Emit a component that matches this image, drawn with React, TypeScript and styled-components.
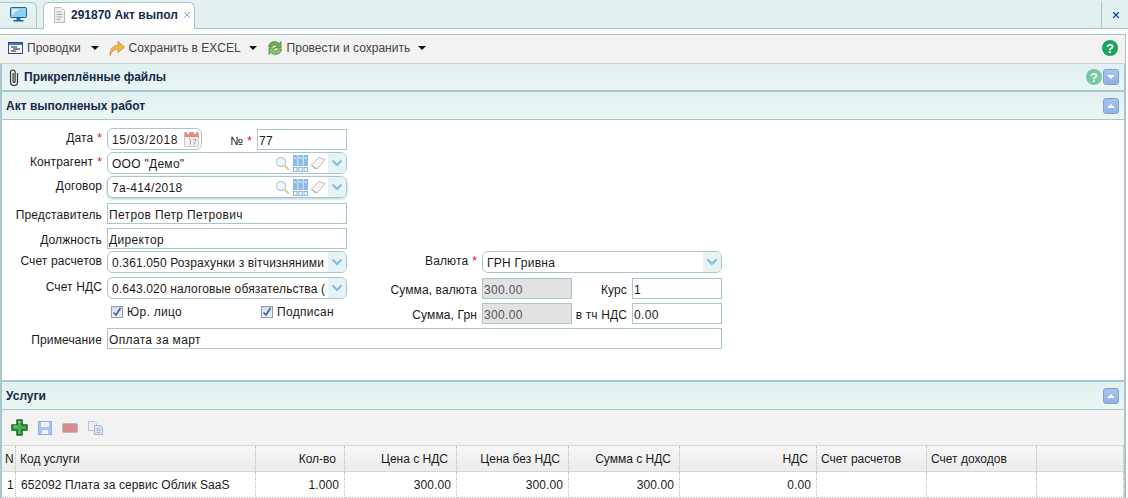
import styled, { createGlobalStyle } from "styled-components";
import { X } from "lucide-react";

const Global = createGlobalStyle`
  html, body { margin: 0; padding: 0; background: #fff; overflow: hidden; }
  body { font-family: "Liberation Sans", Arial, sans-serif; font-size: 12px; color: #1a1a1a; }
`;

const Page = styled.div`
  width: 1128px;
  height: 498px;
  display: flex;
  flex-direction: column;
  overflow: hidden;
`;

const TabBar = styled.div`
  height: 28px;
  flex: none;
  display: flex;
  align-items: flex-end;
  gap: 6px;
  background: #e2f1ef;
  border-bottom: 1px solid #a9c6cc;
`;

const HomeTab = styled.div`
  width: 37px;
  height: 27px;
  margin-bottom: -1px;
  display: flex;
  align-items: center;
  justify-content: center;
  border: 1px solid #a9c6cc;
  border-left: none;
  border-radius: 0 6px 0 0;
  background: linear-gradient(#e8f4f2, #dfeeec);
  padding-bottom: 2px;
  box-sizing: border-box;
`;

const ActiveTab = styled.div`
  width: 152px;
  height: 27px;
  margin-bottom: -1px;
  box-sizing: border-box;
  display: flex;
  align-items: center;
  gap: 4px;
  padding: 0 0 2px 10px;
  background: #fff;
  border: 1px solid #a9c6cc;
  border-bottom: none;
  border-radius: 6px 6px 0 0;
  font-weight: bold;
  color: #15294b;
`;

const TabClose = styled.span`
  display: flex;
  color: #4a6a8a;
`;

const CloseAll = styled.div`
  margin-left: auto;
  width: 27px;
  height: 28px;
  margin-bottom: -1px;
  padding-left: 2px;
  box-sizing: border-box;
  border-left: 1px solid #a9c6cc;
  border-bottom: 1px solid #a9c6cc;
  display: flex;
  align-items: center;
  justify-content: center;
`;

const MainToolbar = styled.div`
  height: 26px;
  margin: 5px 2px 0 0;
  flex: none;
  display: flex;
  align-items: center;
  background: #f2f2f2;
  border-top: 1px solid #a9c6cc;
  border-right: 1px solid #a9c6cc;
  border-bottom: 1px solid #c9d6d8;
  padding: 0 7px 2px 8px;
  color: #444;
`;

const ToolItem = styled.div`
  display: flex;
  align-items: center;
  gap: 4px;
  margin-right: 10px;
`;

const Caret = styled.span<{ $gap?: number }>`
  width: 0;
  height: 0;
  margin-left: ${(p) => p.$gap ?? 6}px;
  border-left: 4px solid transparent;
  border-right: 4px solid transparent;
  border-top: 4px solid #111;
`;

const Help = styled.span<{ $faded?: boolean }>`
  width: 16px;
  height: 16px;
  border-radius: 50%;
  display: flex;
  align-items: center;
  justify-content: center;
  font-weight: bold;
  font-size: 13px;
  color: #fff;
  background: #1aa55f;
  opacity: ${(p) => (p.$faded ? 0.55 : 1)};
`;

const Body = styled.div`
  flex: 1;
  display: flex;
  flex-direction: column;
  border-left: 2px solid #a9c6cc;
  border-right: 2px solid #a9c6cc;
  margin-right: 2px;
`;

const PanelHeader = styled.div<{ $h?: number; $thick?: boolean }>`
  height: ${(p) => p.$h ?? 27}px;
  flex: none;
  display: flex;
  align-items: center;
  gap: 3px;
  padding: 0 5px 0 4px;
  background: linear-gradient(#e1f1ef, #eaf6f4);
  border-bottom: ${(p) => (p.$thick ? 2 : 1)}px solid #a9c6cc;
  font-weight: bold;
  color: #15294b;
`;

const ClipSlot = styled.span`
  display: flex;
  margin: 0 2px 0 3px;
`;

const HeaderTools = styled.div`
  margin-left: auto;
  display: flex;
  align-items: center;
  gap: 1px;
`;

const Toggle = styled.span<{ $down?: boolean }>`
  width: 16px;
  height: 16px;
  box-sizing: border-box;
  border: 1px solid #7fa0d0;
  border-radius: 3px;
  background: linear-gradient(#a6c4ee, #8fb1e4);
  display: flex;
  align-items: center;
  justify-content: center;
  &::after {
    content: "";
    border-left: 4px solid transparent;
    border-right: 4px solid transparent;
    ${(p) => (p.$down ? "border-top: 4px solid #fff;" : "border-bottom: 4px solid #fff;")}
  }
`;

const Form = styled.div`
  height: 262px;
  flex: none;
  box-sizing: border-box;
  padding-top: 8px;
  border-bottom: 2px solid #a9c6cc;
  display: flex;
  flex-direction: column;
`;

const Row = styled.div<{ $top?: number }>`
  display: flex;
  align-items: center;
  margin-top: ${(p) => p.$top ?? 0}px;
`;

const Label = styled.label<{ $w?: number; $flat?: boolean }>`
  width: ${(p) => p.$w ?? 100}px;
  flex: none;
  text-align: right;
  padding-right: 5px;
  box-sizing: border-box;
  white-space: nowrap;
  letter-spacing: 0.12px;
  margin-top: ${(p) => (p.$flat ? 3 : -3)}px;
`;

const Star = styled.span`
  color: #e01010;
  margin-left: 4px;
`;

const TextBox = styled.div<{ $w: number; $off?: boolean }>`
  width: ${(p) => p.$w}px;
  height: 21px;
  flex: none;
  box-sizing: border-box;
  border: 1px solid #a9c6cc;
  padding: 3px 0 0 1px;
  display: flex;
  align-items: center;
  letter-spacing: 0.35px;
  background: ${(p) => (p.$off ? "#e2e2e2" : "#fff")};
  color: ${(p) => (p.$off ? "#555" : "#1a1a1a")};
  white-space: nowrap;
  overflow: hidden;
`;

const Combo = styled.div<{ $w: number; $glow?: boolean }>`
  width: ${(p) => p.$w}px;
  height: 22px;
  flex: none;
  box-sizing: border-box;
  border: 1px solid #a9c6cc;
  border-radius: 6px;
  padding-left: 4px;
  display: flex;
  align-items: center;
  overflow: hidden;
  white-space: nowrap;
  ${(p) => (p.$glow ? "box-shadow: 0 1px 3px rgba(120,160,170,.6);" : "")}
`;

const ComboText = styled.span<{ $tight?: boolean; $wide?: boolean }>`
  flex: 1;
  min-width: 0;
  overflow: hidden;
  padding-top: 1px;
  margin-right: 3px;
  letter-spacing: ${(p) => (p.$tight ? 0.15 : p.$wide ? 0.6 : 0.28)}px;
`;

const ComboIcons = styled.span`
  display: flex;
  align-items: center;
  gap: 3px;
  margin-right: 2px;
  opacity: 0.8;
`;

const CalendarSlot = styled.span`
  display: flex;
  margin-right: 2px;
`;

const Arrow = styled.span`
  width: 18px;
  height: 100%;
  flex: none;
  display: flex;
  align-items: center;
  justify-content: center;
  background: #e6f3f3;
`;

const Columns = styled.div`
  display: flex;
  margin-top: 2px;
`;

const LeftCol = styled.div`
  width: 345px;
  flex: none;
  display: flex;
  flex-direction: column;
  gap: 2px;
`;

const RightCol = styled.div`
  display: flex;
  flex-direction: column;
`;

const Checks = styled.div`
  display: flex;
  margin: 4px 0 0 109px;
`;

const Check = styled.div<{ $w: number }>`
  width: ${(p) => p.$w}px;
  display: flex;
  align-items: center;
  gap: 4px;
  letter-spacing: 0.3px;
`;

const Box = styled.span`
  width: 12px;
  height: 12px;
  box-sizing: border-box;
  border: 1px solid #8f9db0;
  background: linear-gradient(#d5dbe8, #f2f4f8);
  display: flex;
  align-items: center;
  justify-content: center;
`;

const GridToolbar = styled.div`
  height: 35px;
  flex: none;
  display: flex;
  align-items: center;
  gap: 10px;
  padding-left: 9px;
  background: #f2f2f2;
  border-bottom: 1px solid #d8d8d8;
`;

const Table = styled.div`
  display: grid;
  grid-template-columns: 14px 240px 89px 112px 112px 111px 137px 110px 110px 1fr;
`;

const Head = styled.div<{ $right?: boolean }>`
  height: 26px;
  box-sizing: border-box;
  padding: 0 8px 0 4px;
  display: flex;
  align-items: center;
  justify-content: ${(p) => (p.$right ? "flex-end" : "flex-start")};
  background: linear-gradient(#f7f7f7, #ececec);
  border-right: 1px dotted #bbb;
  border-bottom: 1px solid #d8d8d8;
  white-space: nowrap;
  &:first-child { padding: 0 0 0 3px; }
`;

const Cell = styled.div<{ $right?: boolean }>`
  height: 26px;
  box-sizing: border-box;
  padding: 0 5px;
  display: flex;
  align-items: center;
  justify-content: ${(p) => (p.$right ? "flex-end" : "flex-start")};
  border-right: 1px dotted #bbb;
  border-bottom: 1px dotted #bbb;
  letter-spacing: 0.1px;
  white-space: nowrap;
  &:first-child { padding: 0 0 0 4px; }
`;

const Monitor = () => (
  <svg width="17" height="15" viewBox="0 0 17 15">
    <rect x=".5" y=".5" width="16" height="10" rx="1" fill="#8fd0ee" stroke="#1f5f9f" />
    <path d="M2 2h7L2 8z" fill="#d5f0fa" />
    <rect x="6.500" y="11" width="4" height="2" fill="#2a6fae" />
    <rect x="3.500" y="13" width="10" height="1.500" fill="#1f5f9f" />
  </svg>
);

const Doc = () => (
  <svg width="13" height="16" viewBox="0 0 13 16">
    <path d="M.5.5h7l3 3v12H.5z" fill="#eee" stroke="#bbb" />
    <path d="M2.500 5h5M2.500 7.500h6M2.500 10h6M2.500 12.500h4" stroke="#aaa" />
  </svg>
);

const Clip = () => (
  <svg width="10" height="17" viewBox="0 0 10 17" fill="none" stroke="#333" strokeWidth="1.200">
    <path d="M8.500 4v9a3.500 3.500 0 0 1-7 0V3.300a2.300 2.300 0 0 1 4.600 0v9.200a1 1 0 0 1-2 0V4" />
  </svg>
);

const ListIcon = () => (
  <svg width="15" height="12" viewBox="0 0 15 12">
    <rect x=".5" y=".5" width="14" height="11" fill="#f4f6fa" stroke="#24508f" />
    <rect x="1" y="1" width="13" height="2" fill="#3f78c8" />
    <path d="M3 5h6M5 7h7M3 9h5" stroke="#222" />
  </svg>
);

const ExportArrow = () => (
  <svg width="16" height="16" viewBox="0 0 16 16">
    <path d="M1 15.500C1 8 4.500 5.500 9 5.500V1.500l6.500 5.500L9 12.500V9.300C5.500 9.300 3 11 1 15.500z" fill="#f6b53f" stroke="#b98a3a" strokeWidth=".8" />
  </svg>
);

const Refresh = () => (
  <svg width="16" height="16" viewBox="0 0 16 16">
    <path d="M1.500 7a6 6 0 0 1 10.500-3.500L14 1.500V8H8l2-2a3.200 3.200 0 0 0-5.300 1z" fill="#6fb04a" stroke="#3f7f2f" strokeWidth=".7" />
    <path d="M14.500 9A6 6 0 0 1 4 12.500L2 14.500V8h6l-2 2a3.200 3.200 0 0 0 5.300-1z" fill="#8cc466" stroke="#3f7f2f" strokeWidth=".7" />
  </svg>
);

const Calendar = () => (
  <svg width="15" height="16" viewBox="0 0 15 16">
    <rect x=".5" y="1.500" width="14" height="14" rx="1" fill="#f0f0ee" stroke="#c8c8c4" />
    <rect x=".5" y="1.500" width="14" height="4.500" fill="#e58a80" />
    <rect x="3" y="0" width="2" height="3" fill="#f4f4f4" />
    <rect x="10" y="0" width="2" height="3" fill="#f4f4f4" />
    <path d="M5 8.500h1.500v5M9 8.500h3l-2 5" stroke="#aaa" fill="none" />
  </svg>
);

const Search = () => (
  <svg width="15" height="15" viewBox="0 0 15 15" fill="none">
    <circle cx="6" cy="6" r="4.500" fill="#eef5fb" stroke="#a9c2d6" strokeWidth="1.300" />
    <path d="M9.500 9.500l4.300 4.300" stroke="#e3b56a" strokeWidth="2" />
  </svg>
);

const Binders = () => (
  <svg width="15" height="17" viewBox="0 0 15 17">
    <rect x="0" y="0" width="4.500" height="11" fill="#6fa8dc" />
    <rect x="5.250" y="0" width="4.500" height="11" fill="#6fa8dc" />
    <rect x="10.500" y="0" width="4.500" height="11" fill="#6fa8dc" />
    <path d="M1 3h2.500M6.250 3h2.500M11.500 3h2.500" stroke="#fff" strokeWidth="1.200" />
    <rect x=".5" y="12.500" width="3.500" height="4" fill="#e6f1fb" stroke="#6fa8dc" />
    <rect x="5.750" y="12.500" width="3.500" height="4" fill="#e6f1fb" stroke="#6fa8dc" />
    <rect x="11" y="12.500" width="3.500" height="4" fill="#e6f1fb" stroke="#6fa8dc" />
  </svg>
);

const Eraser = () => (
  <svg width="15" height="13" viewBox="0 0 15 13">
    <path d="M.5 8l7.500-7.500 6 2.500-7.500 8.500H3.500z" fill="#f2f2f2" stroke="#a8a8a8" />
    <path d="M.5 8l5 3.500" stroke="#a8a8a8" />
  </svg>
);

const Chevron = () => (
  <svg width="12" height="8" viewBox="0 0 12 8" fill="none">
    <path d="M1.500 1.500L6 6l4.500-4.500" stroke="#7dbce8" strokeWidth="2" />
  </svg>
);

const Tick = () => (
  <svg width="10" height="10" viewBox="0 0 10 10" fill="none">
    <path d="M1.500 5.500L4 8l4.500-7" stroke="#3a5f9f" strokeWidth="1.600" />
  </svg>
);

const Plus = () => (
  <svg width="17" height="17" viewBox="0 0 17 17">
    <path d="M6 1h5v5h5v5h-5v5H6v-5H1V6h5z" fill="#3fb54a" stroke="#1f5f2a" strokeLinejoin="round" strokeWidth="1.500" />
    <path d="M7 3h3M3 7h3" stroke="#a8e6ae" />
  </svg>
);

const Floppy = () => (
  <svg width="14" height="14" viewBox="0 0 14 14">
    <rect x=".5" y=".5" width="13" height="13" fill="#a9c4ee" stroke="#8daee0" />
    <rect x="3" y="1" width="8" height="5" fill="#eef3fb" />
    <rect x="4" y="9" width="6" height="4" fill="#eef3fb" />
  </svg>
);

const Minus = () => (
  <svg width="16" height="10" viewBox="0 0 16 10">
    <rect x=".5" y=".5" width="15" height="9" rx="1.500" fill="#d98a8a" stroke="#c8b4b4" />
  </svg>
);

const Copy = () => (
  <svg width="15" height="14" viewBox="0 0 15 14">
    <path d="M.5.5h6l2 2v7h-8z" fill="#eef1f6" stroke="#b8c2d2" />
    <path d="M6.500 4.500h6l2 2v7h-8z" fill="#dde5f2" stroke="#a8b6cc" />
    <path d="M8.500 7.500h4M8.500 9.500h4M8.500 11.500h4" stroke="#a8b6cc" />
  </svg>
);

type Col = { title: string; right?: boolean; value?: string };

const columns: Col[] = [
  { title: "N", value: "1" },
  { title: "Код услуги", value: "652092 Плата за сервис Облик SaaS" },
  { title: "Кол-во", right: true, value: "1.000" },
  { title: "Цена с НДС", right: true, value: "300.00" },
  { title: "Цена без НДС", right: true, value: "300.00" },
  { title: "Сумма с НДС", right: true, value: "300.00" },
  { title: "НДС", right: true, value: "0.00" },
  { title: "Счет расчетов" },
  { title: "Счет доходов" },
  { title: "" },
];

const Lookup = () => (
  <ComboIcons>
    <Search />
    <Binders />
    <Eraser />
  </ComboIcons>
);

const App = () => {
  return (
    <Page>
      <Global />
      <TabBar>
        <HomeTab>
          <Monitor />
        </HomeTab>
        <ActiveTab>
          <Doc />
          291870 Акт выпол
          <TabClose>
            <X size={10} strokeWidth={1.5} />
          </TabClose>
        </ActiveTab>
        <CloseAll>
          <X size={10} strokeWidth={3} color="#0b4fa8" />
        </CloseAll>
      </TabBar>

      <MainToolbar>
        <ToolItem>
          <ListIcon />
          Проводки
          <Caret />
        </ToolItem>
        <ToolItem>
          <ExportArrow />
          Сохранить в EXCEL
          <Caret $gap={4} />
        </ToolItem>
        <ToolItem>
          <Refresh />
          Провести и сохранить
          <Caret $gap={4} />
        </ToolItem>
        <HeaderTools>
          <Help>?</Help>
        </HeaderTools>
      </MainToolbar>

      <Body>
        <PanelHeader $h={26} $thick>
          <ClipSlot>
            <Clip />
          </ClipSlot>
          Прикреплённые файлы
          <HeaderTools>
            <Help $faded>?</Help>
            <Toggle $down />
          </HeaderTools>
        </PanelHeader>
        <PanelHeader>
          Акт выполненых работ
          <HeaderTools>
            <Toggle />
          </HeaderTools>
        </PanelHeader>

        <Form>
          <Row>
            <Label $w={105}>
              Дата<Star>*</Star>
            </Label>
            <Combo $w={95}>
              <ComboText $wide>15/03/2018</ComboText>
              <CalendarSlot>
                <Calendar />
              </CalendarSlot>
            </Combo>
            <Label $w={55} $flat>
              №<Star>*</Star>
            </Label>
            <TextBox $w={90}>77</TextBox>
          </Row>
          <Row $top={2}>
            <Label $w={105}>
              Контрагент<Star>*</Star>
            </Label>
            <Combo $w={240}>
              <ComboText>ООО "Демо"</ComboText>
              <Lookup />
              <Arrow>
                <Chevron />
              </Arrow>
            </Combo>
          </Row>
          <Row $top={2}>
            <Label $w={105}>Договор</Label>
            <Combo $w={240} $glow>
              <ComboText>7а-414/2018</ComboText>
              <Lookup />
              <Arrow>
                <Chevron />
              </Arrow>
            </Combo>
          </Row>
          <Row $top={5}>
            <Label $w={105} $flat>
              Представитель
            </Label>
            <TextBox $w={240}>Петров Петр Петрович</TextBox>
          </Row>
          <Row $top={4}>
            <Label $w={105} $flat>
              Должность
            </Label>
            <TextBox $w={240}>Директор</TextBox>
          </Row>

          <Columns>
            <LeftCol>
              <Row>
                <Label $w={105}>Счет расчетов</Label>
                <Combo $w={240}>
                  <ComboText $tight>0.361.050 Розрахунки з вітчизняними</ComboText>
                  <Arrow>
                    <Chevron />
                  </Arrow>
                </Combo>
              </Row>
              <Row $top={2}>
                <Label $w={105}>Счет НДС</Label>
                <Combo $w={240}>
                  <ComboText $tight>0.643.020 налоговые обязательства (</ComboText>
                  <Arrow>
                    <Chevron />
                  </Arrow>
                </Combo>
              </Row>
              <Checks>
                <Check $w={150}>
                  <Box>
                    <Tick />
                  </Box>
                  Юр. лицо
                </Check>
                <Check $w={80}>
                  <Box>
                    <Tick />
                  </Box>
                  Подписан
                </Check>
              </Checks>
            </LeftCol>
            <RightCol>
              <Row>
                <Label $w={135}>
                  Валюта<Star>*</Star>
                </Label>
                <Combo $w={240}>
                  <ComboText>ГРН Гривна</ComboText>
                  <Arrow>
                    <Chevron />
                  </Arrow>
                </Combo>
              </Row>
              <Row $top={5}>
                <Label $w={135} $flat>
                  Сумма, валюта
                </Label>
                <TextBox $w={90} $off>
                  300.00
                </TextBox>
                <Label $w={60} $flat>
                  Курс
                </Label>
                <TextBox $w={90}>1</TextBox>
              </Row>
              <Row $top={4}>
                <Label $w={135} $flat>
                  Сумма, Грн
                </Label>
                <TextBox $w={90} $off>
                  300.00
                </TextBox>
                <Label $w={60} $flat>
                  в тч НДС
                </Label>
                <TextBox $w={90}>0.00</TextBox>
              </Row>
            </RightCol>
          </Columns>

          <Row $top={4}>
            <Label $w={105} $flat>
              Примечание
            </Label>
            <TextBox $w={615}>Оплата за март</TextBox>
          </Row>
        </Form>

        <PanelHeader>
          Услуги
          <HeaderTools>
            <Toggle />
          </HeaderTools>
        </PanelHeader>
        <GridToolbar>
          <Plus />
          <Floppy />
          <Minus />
          <Copy />
        </GridToolbar>
        <Table>
          {columns.map((c) => (
            <Head key={c.title} $right={c.right}>
              {c.title}
            </Head>
          ))}
          {columns.map((c) => (
            <Cell key={c.title} $right={c.right}>
              {c.value}
            </Cell>
          ))}
        </Table>
      </Body>
    </Page>
  );
};

export default App;
